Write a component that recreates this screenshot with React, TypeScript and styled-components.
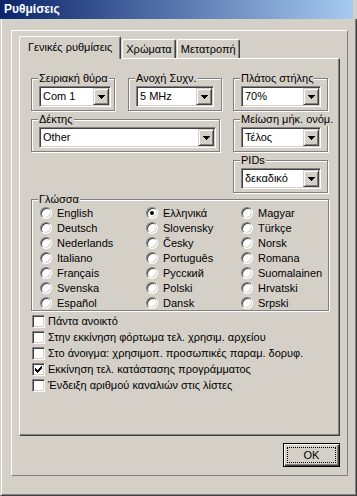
import styled, { createGlobalStyle } from 'styled-components';

const GlobalStyle = createGlobalStyle`
  html, body {
    margin: 0;
    padding: 0;
    background: #d4d0c8;
  }
  body {
    font-family: 'Liberation Sans', Arial, sans-serif;
    font-size: 11px;
    color: #000;
  }
`;

const languages = [
  'English', 'Deutsch', 'Nederlands', 'Italiano', 'Français', 'Svenska', 'Español',
  'Ελληνικά', 'Slovensky', 'Česky', 'Português', 'Русский', 'Polski', 'Dansk',
  'Magyar', 'Türkçe', 'Norsk', 'Romana', 'Suomalainen', 'Hrvatski', 'Srpski',
];

const options = [
  { label: 'Πάντα ανοικτό', checked: false },
  { label: 'Στην εκκίνηση φόρτωμα τελ. χρησιμ. αρχείου', checked: false },
  { label: 'Στο άνοιγμα: χρησιμοπ. προσωπικές παραμ. δορυφ.', checked: false },
  { label: 'Εκκίνηση τελ. κατάστασης προγράμματος', checked: true },
  { label: 'Ένδειξη αριθμού καναλιών στις λίστες', checked: false },
];

function DropArrow() {
  return (
    <svg width="7" height="4" viewBox="0 0 7 4" shapeRendering="crispEdges">
      <rect x="0" y="0" width="7" height="1" fill="#000" />
      <rect x="1" y="1" width="5" height="1" fill="#000" />
      <rect x="2" y="2" width="3" height="1" fill="#000" />
      <rect x="3" y="3" width="1" height="1" fill="#000" />
    </svg>
  );
}

function CheckMark() {
  const px: [number, number][] = [
    [6, 0], [5, 1], [6, 1], [0, 2], [4, 2], [5, 2], [6, 2],
    [0, 3], [1, 3], [3, 3], [4, 3], [5, 3], [0, 4], [1, 4], [2, 4], [3, 4], [4, 4],
    [1, 5], [2, 5], [3, 5], [2, 6],
  ];
  return (
    <svg width="7" height="7" viewBox="0 0 7 7" shapeRendering="crispEdges">
      {px.map(([x, y]) => (
        <rect key={`${x}-${y}`} x={x} y={y} width="1" height="1" fill="#000" />
      ))}
    </svg>
  );
}

function ComboBox({ value, width }: { value: string; width: number }) {
  return (
    <Combo $w={width}>
      <ComboText>{value}</ComboText>
      <DropButton>
        <DropArrow />
      </DropButton>
    </Combo>
  );
}

export default function App() {
  return (
    <>
      <GlobalStyle />
      <Window>
        <TitleBar>Ρυθμίσεις</TitleBar>
        <Frame>
          <Panel>
            <TabStrip>
              <Tab $active>Γενικές ρυθμίσεις</Tab>
              <Tab>Χρώματα</Tab>
              <Tab>Μετατροπή</Tab>
            </TabStrip>
            <TabPane>
              <TopArea>
                <LeftCol>
                  <GroupRow>
                    <Group $w={84}>
                      <GroupLabel>Σειριακή θύρα</GroupLabel>
                      <ComboBox value="Com 1" width={72} />
                    </Group>
                    <Group $w={94}>
                      <GroupLabel>Ανοχή Συχν.</GroupLabel>
                      <ComboBox value="5 MHz" width={78} />
                    </Group>
                  </GroupRow>
                  <Group $w={189}>
                    <GroupLabel>Δέκτης</GroupLabel>
                    <ComboBox value="Other" width={177} />
                  </Group>
                </LeftCol>
                <RightCol>
                  <Group $w={95}>
                    <GroupLabel>Πλάτος στήλης</GroupLabel>
                    <ComboBox value="70%" width={80} />
                  </Group>
                  <Group $w={95}>
                    <GroupLabel>Μείωση μήκ. ονόμ.</GroupLabel>
                    <ComboBox value="Τέλος" width={80} />
                  </Group>
                  <Group $w={95}>
                    <GroupLabel>PIDs</GroupLabel>
                    <ComboBox value="δεκαδικό" width={80} />
                  </Group>
                </RightCol>
              </TopArea>

              <LanguageGroup>
                <GroupLabel>Γλώσσα</GroupLabel>
                <RadioGrid>
                  {languages.map((lang) => (
                    <RadioRow key={lang}>
                      <Radio>{lang === 'Ελληνικά' && <RadioDot />}</Radio>
                      <span>{lang}</span>
                    </RadioRow>
                  ))}
                </RadioGrid>
              </LanguageGroup>

              <CheckList>
                {options.map((o) => (
                  <CheckRow key={o.label}>
                    <CheckBox>{o.checked && <CheckMark />}</CheckBox>
                    <span>{o.label}</span>
                  </CheckRow>
                ))}
              </CheckList>
            </TabPane>
            <Footer>
              <OkButton>
                <FocusRect>OK</FocusRect>
              </OkButton>
            </Footer>
          </Panel>
        </Frame>
      </Window>
    </>
  );
}

const Window = styled.div`
  width: 357px;
  height: 496px;
  display: flex;
  flex-direction: column;
  background: #d4d0c8;
`;

const TitleBar = styled.div`
  height: 19px;
  margin-right: 4px;
  padding-left: 4px;
  background: linear-gradient(to right, #0a246a, #a6caf0);
  color: #fff;
  font-weight: bold;
  font-size: 12px;
  line-height: 19px;
`;

const Frame = styled.div`
  flex: 1;
  display: flex;
  flex-direction: column;
  border-left: 1px solid #d4d0c8;
  border-right: 1px solid #404040;
  border-bottom: 1px solid #404040;
  box-shadow: inset 1px 0 #fff, inset -1px -1px #808080;
  padding: 11px 8px 19px 10px;
`;

const Panel = styled.div`
  width: 337px;
  height: 446px;
  box-sizing: border-box;
  display: flex;
  flex-direction: column;
  border: 1px solid;
  border-color: #fff #808080 #808080 #fff;
  padding: 5px 7px 8px 7px;
`;

const TabStrip = styled.div`
  height: 22px;
  display: flex;
  align-items: flex-end;
  position: relative;
  z-index: 1;
`;

const Tab = styled.div<{ $active?: boolean }>`
  box-sizing: border-box;
  height: ${(p) => (p.$active ? 23 : 19)}px;
  margin-bottom: ${(p) => (p.$active ? -1 : 0)}px;
  margin-left: ${(p) => (p.$active ? 0 : 1)}px;
  padding: 0 ${(p) => (p.$active ? 8 : 3)}px;
  display: flex;
  align-items: ${(p) => (p.$active ? 'flex-start' : 'center')};
  padding-top: ${(p) => (p.$active ? 4 : 0)}px;
  background: #d4d0c8;
  border-left: 1px solid #fff;
  border-top: 1px solid #fff;
  border-right: 1px solid #404040;
  border-radius: 2px 2px 0 0;
  box-shadow: inset -1px 0 #808080;
  white-space: nowrap;
`;

const TabPane = styled.div`
  height: 378px;
  box-sizing: border-box;
  border: 1px solid;
  border-color: #fff #404040 #404040 #fff;
  box-shadow: inset -1px -1px #808080;
  padding: 19px 0 0 11px;
  display: flex;
  flex-direction: column;
`;

const TopArea = styled.div`
  display: flex;
  gap: 11px;
`;

const LeftCol = styled.div`
  display: flex;
  flex-direction: column;
  gap: 8px;
`;

const RightCol = styled.div`
  display: flex;
  flex-direction: column;
  gap: 8px;
`;

const GroupRow = styled.div`
  display: flex;
  gap: 13px;
`;

const Group = styled.div<{ $w: number }>`
  position: relative;
  width: ${(p) => p.$w}px;
  height: 33px;
  box-sizing: border-box;
  border: 1px solid #808080;
  box-shadow: 1px 1px 0 #fff, inset 1px 1px 0 #fff;
  padding: 7px 0 0 7px;
`;

const GroupLabel = styled.span`
  position: absolute;
  top: -7px;
  left: 6px;
  padding: 0 1px;
  line-height: 13px;
  background: #d4d0c8;
  white-space: nowrap;
`;

const Combo = styled.div<{ $w: number }>`
  width: ${(p) => p.$w}px;
  height: 21px;
  box-sizing: border-box;
  display: flex;
  border: 1px solid;
  border-color: #808080 #fff #fff #808080;
  box-shadow: inset 1px 1px #404040, inset -1px -1px #d4d0c8;
  padding: 1px;
  background: #fff;
`;

const ComboText = styled.div`
  flex: 1;
  padding-left: 2px;
  line-height: 17px;
  white-space: nowrap;
  overflow: hidden;
`;

const DropButton = styled.div`
  width: 16px;
  height: 17px;
  box-sizing: border-box;
  display: flex;
  align-items: center;
  justify-content: center;
  background: #d4d0c8;
  border: 1px solid;
  border-color: #d4d0c8 #404040 #404040 #d4d0c8;
  box-shadow: inset 1px 1px #fff, inset -1px -1px #808080;
`;

const LanguageGroup = styled.div`
  position: relative;
  width: 298px;
  height: 112px;
  box-sizing: border-box;
  margin-top: 6px;
  border: 1px solid #808080;
  box-shadow: 1px 1px 0 #fff, inset 1px 1px 0 #fff;
  padding: 5px 0 0 8px;
`;

const RadioGrid = styled.div`
  display: grid;
  grid-template-columns: 106px 95px 1fr;
  grid-template-rows: repeat(7, 15px);
  grid-auto-flow: column;
`;

const RadioRow = styled.div`
  display: flex;
  align-items: center;
  gap: 5px;
  white-space: nowrap;
`;

const Radio = styled.span`
  width: 12px;
  height: 12px;
  box-sizing: border-box;
  flex: none;
  border-radius: 50%;
  border: 1px solid;
  border-color: #808080 #fff #fff #808080;
  box-shadow: inset 1px 1px #404040, inset -1px -1px #d4d0c8;
  background: #fff;
  display: flex;
  align-items: center;
  justify-content: center;
`;

const RadioDot = styled.span`
  width: 4px;
  height: 4px;
  border-radius: 50%;
  background: #000;
`;

const CheckList = styled.div`
  margin-top: 2px;
  margin-left: 1px;
  display: flex;
  flex-direction: column;
`;

const CheckRow = styled.div`
  height: 16px;
  display: flex;
  align-items: center;
  gap: 3px;
  white-space: nowrap;
`;

const CheckBox = styled.span`
  width: 13px;
  height: 13px;
  box-sizing: border-box;
  flex: none;
  border: 1px solid;
  border-color: #808080 #fff #fff #808080;
  box-shadow: inset 1px 1px #404040, inset -1px -1px #d4d0c8;
  background: #fff;
  display: flex;
  align-items: center;
  justify-content: center;
`;

const Footer = styled.div`
  display: flex;
  justify-content: flex-end;
  margin-top: 7px;
`;

const OkButton = styled.div`
  width: 57px;
  height: 24px;
  box-sizing: border-box;
  border: 1px solid #000;
  background: #d4d0c8;
  box-shadow: inset 1px 1px #fff, inset -1px -1px #404040, inset -2px -2px #808080;
  padding: 3px;
  display: flex;
`;

const FocusRect = styled.div`
  flex: 1;
  border: 1px dotted #000;
  display: flex;
  align-items: center;
  justify-content: center;
`;
